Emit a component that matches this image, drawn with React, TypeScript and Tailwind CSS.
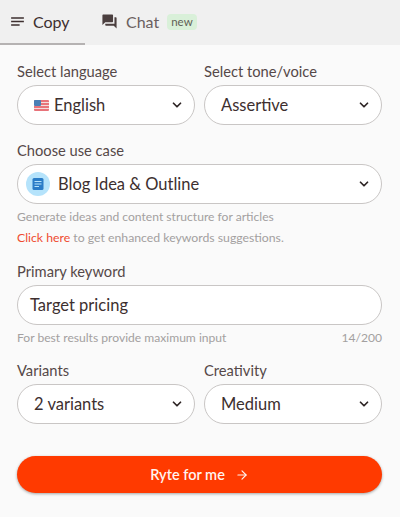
import { LuArrowRight, LuChevronDown } from 'react-icons/lu';
import { MdForum, MdNotes } from 'react-icons/md';

type SelectBoxProps = {
    value: string;
    flag?: boolean;
};

function UsFlag() {
    return (
        <svg width="15" height="11" viewBox="0 0 15 11" className="mr-[5px]" aria-hidden>
            <rect width="15" height="11" rx="1" fill="#e8737a" />
            <path d="M0 2.5h15M0 5.5h15M0 8.5h15" stroke="#f3dcdc" strokeWidth="1" />
            <rect width="7" height="6" rx="1" fill="#4a7fb5" />
        </svg>
    );
}

function SelectBox({ value, flag }: SelectBoxProps) {
    return (
        <div className="flex h-10 items-center justify-between rounded-full border border-[#c9c6c5] bg-white pl-[16px] pr-[10px] text-[16.5px] text-[#3d2f2f]">
            <span className="flex items-center">
                {flag && <UsFlag />}
                {value}
            </span>
            <LuChevronDown className="h-[14px] w-[14px] text-[#2e2525]" strokeWidth={3} aria-hidden />
        </div>
    );
}

function Label({ children }: { children: string }) {
    return <div className="mb-[3px] h-[20px] text-[14.7px] leading-[18px] text-[#554848]">{children}</div>;
}

export default function App() {
    return (
        <div className="h-[517px] w-[400px] overflow-hidden bg-[#fafafa] font-['Lato',sans-serif]">
            <div className="flex h-[45px] items-stretch bg-[#f0f0f0]">
                <div className="flex w-[85px] items-center border-b-[2px] border-[#b5b2b2] pl-[9px] text-[#3d2f2f]">
                    <MdNotes className="h-[17px] w-[17px]" aria-hidden />
                    <span className="ml-[7px] text-[16px]">Copy</span>
                </div>
                <div className="ml-[16px] flex items-center pb-[2px] text-[#6b5f5f]">
                    <MdForum className="h-[17px] w-[17px] text-[#4b3f3f]" aria-hidden />
                    <span className="ml-[8px] text-[16px]">Chat</span>
                    <span className="ml-[8px] rounded-[4px] bg-[#d9f0d9] px-[4px] py-[1px] text-[11.5px] leading-[14px] text-[#5f5f55]">new</span>
                </div>
            </div>

            <div className="flex flex-col pl-[17px] pr-[18px] pt-[17px]">
                <div className="grid grid-cols-[178px_178px] gap-x-[9px]">
                    <div>
                        <Label>Select language</Label>
                        <SelectBox value="English" flag />
                    </div>
                    <div>
                        <Label>Select tone/voice</Label>
                        <SelectBox value="Assertive" />
                    </div>
                </div>

                <div className="mt-[16px]">
                    <Label>Choose use case</Label>
                    <div className="flex h-10 items-center justify-between rounded-full border border-[#c9c6c5] bg-white pl-[8px] pr-[10px] text-[16.5px] text-[#3d2f2f]">
                        <span className="flex items-center">
                            <span className="mr-[8px] flex h-6 w-6 items-center justify-center rounded-full bg-[#b5e3fb]">
                                <svg width="12" height="12" viewBox="0 0 12 12" aria-hidden>
                                    <rect width="11" height="12" x="0.5" rx="1.5" fill="#2a7cc7" />
                                    <path d="M2.5 3.5h7M2.5 6h7M2.5 8.5h4.5" stroke="#b5e3fb" strokeWidth="1" />
                                </svg>
                            </span>
                            Blog Idea &amp; Outline
                        </span>
                        <LuChevronDown className="h-[14px] w-[14px] text-[#2e2525]" strokeWidth={3} aria-hidden />
                    </div>
                    <p className="mt-[5px] text-[12.1px] leading-[16px] text-[#a3a0a0]">Generate ideas and content structure for articles</p>
                    <p className="mt-[5px] text-[12.25px] leading-[16px] text-[#a3a0a0]">
                        <span className="text-[#ef4a30]">Click here</span> to get enhanced keywords suggestions.
                    </p>
                </div>

                <div className="mt-[16px]">
                    <Label>Primary keyword</Label>
                    <div className="flex h-10 items-center rounded-full border border-[#c9c6c5] bg-white px-[12px] text-[16.5px] text-[#3d2f2f]">Target pricing</div>
                    <div className="mt-[5px] flex justify-between text-[12.1px] leading-[16px] text-[#a3a0a0]">
                        <span>For best results provide maximum input</span>
                        <span>14/200</span>
                    </div>
                </div>

                <div className="mt-[15px] grid grid-cols-[178px_178px] gap-x-[9px]">
                    <div>
                        <Label>Variants</Label>
                        <SelectBox value="2 variants" />
                    </div>
                    <div>
                        <Label>Creativity</Label>
                        <SelectBox value="Medium" />
                    </div>
                </div>

                <button className="mt-[32px] flex h-[37px] items-center justify-center rounded-full bg-[#ff3a00] text-[14.5px] font-semibold text-[#fff3ef] shadow-[0_1px_3px_rgba(0,0,0,0.35)]">
                    Ryte for me
                    <LuArrowRight className="ml-[10px] h-[14px] w-[14px]" aria-hidden />
                </button>
            </div>
        </div>
    );
}
